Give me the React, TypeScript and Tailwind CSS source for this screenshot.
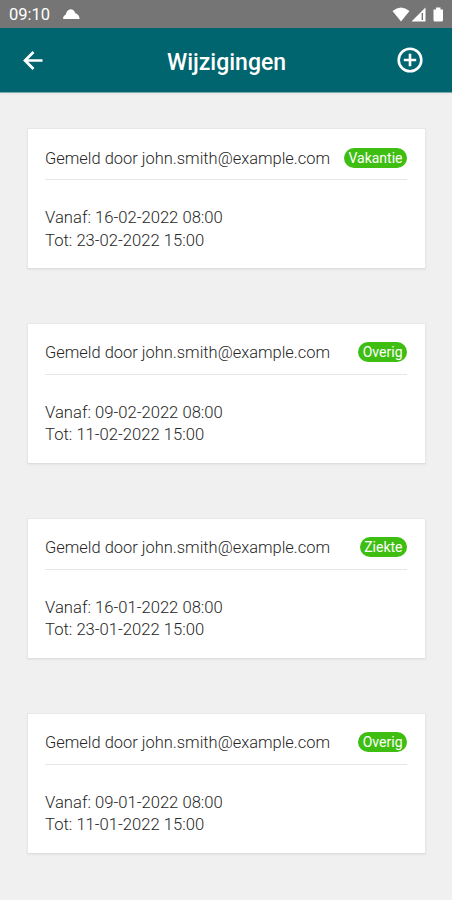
type Report = {
  type: string
  from: string
  until: string
}

const reports: Report[] = [
  { type: 'Vakantie', from: '16-02-2022 08:00', until: '23-02-2022 15:00' },
  { type: 'Overig', from: '09-02-2022 08:00', until: '11-02-2022 15:00' },
  { type: 'Ziekte', from: '16-01-2022 08:00', until: '23-01-2022 15:00' },
  { type: 'Overig', from: '09-01-2022 08:00', until: '11-01-2022 15:00' },
]

function StatusBar() {
  return (
    <div className="flex h-7 items-center justify-between bg-[#757575] pl-[9px] pr-[7px] text-white">
      <div className="flex items-center gap-3 pt-0.5">
        <span className="text-[16.5px] leading-5">09:10</span>
        <svg className="-mt-0.5" width="18" height="12" viewBox="0 0 18 12" fill="currentColor">
          <path d="M1.2 11Q.6 8.2 3.8 6.6Q4.6 2.2 8.2 1.2Q12 1 13.2 5Q17.4 6.6 17.6 11Z" />
        </svg>
      </div>
      <svg width="54" height="18" viewBox="0 0 54 18" fill="currentColor">
        <path d="M1.5 6Q10 -1 18.5 6L10 16.5Z" />
        <path d="M34.5 2.5V16.5H20.5Z" />
        <path d="M30.6 8h1.4v7h-1.4Z" fill="#757575" />
        <path d="M42.5 4.5h2.5V2.5h4.5v2h2.5v10.5q0 1.5-1.5 1.5h-6.5Q42.5 16.5 42.5 15Z" />
      </svg>
    </div>
  )
}

function Header() {
  return (
    <header className="flex h-[65px] items-center justify-between border-b border-[#7fa9ac] bg-[#00656f] pl-5 pr-[27px] text-white shadow-xs">
      <button aria-label="Terug" className="w-7">
        <svg width="26" height="26" viewBox="0 0 26 26" fill="none" stroke="currentColor" strokeWidth="2.7">
          <path d="M22.5 13.5H5M13.5 5L5 13.5L13.5 22" />
        </svg>
      </button>
      <h1 className="pl-2.5 pt-[5px] text-[23px] font-medium leading-7">Wijzigingen</h1>
      <button aria-label="Toevoegen" className="w-[30px]">
        <svg width="30" height="30" viewBox="0 0 30 30" fill="none" stroke="currentColor" strokeWidth="2.6">
          <circle cx="15" cy="15" r="11.3" />
          <path d="M15 8.8V21.2M8.8 15H21.2" />
        </svg>
      </button>
    </header>
  )
}

function ReportCard({ report }: { report: Report }) {
  return (
    <article className="h-[141px] border border-[#e5e8e9] border-b-[#dcdfe0] bg-white pl-[17px] pr-[18px] shadow-xs">
      <div className="flex h-[51px] items-center justify-between border-b border-[#e6e6e6] pt-[9px]">
        <span className="whitespace-nowrap text-[16.45px] font-light leading-[22px]">
          Gemeld door john.smith@example.com
        </span>
        <span className="-mt-0.5 h-5 rounded-full bg-[#3fbe12] px-[4.5px] text-[14px] leading-5 text-white">
          {report.type}
        </span>
      </div>
      <div className="pt-[27px] text-[16.65px] font-light leading-[22.5px]">
        <p>Vanaf: {report.from}</p>
        <p>Tot: {report.until}</p>
      </div>
    </article>
  )
}

export default function App() {
  return (
    <div className="h-[900px] w-[452px] overflow-hidden bg-[#f0f0f0] font-['Roboto',sans-serif] text-[#262626]">
      <StatusBar />
      <Header />
      <main className="flex flex-col gap-[53.9px] pl-[27px] pr-[26px] pt-[35px]">
        {reports.map((report) => (
          <ReportCard key={report.from} report={report} />
        ))}
      </main>
    </div>
  )
}
